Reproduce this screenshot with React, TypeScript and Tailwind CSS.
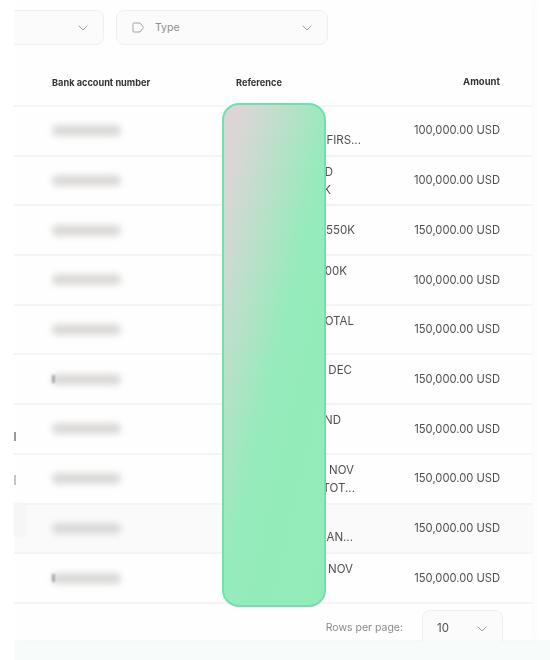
import React from 'react';
import { ChevronDown } from 'lucide-react';

type Line = { text: string; end: string };

const rows: { lines: Line[]; amount: string; mark?: boolean; hover?: boolean; edge?: string }[] = [
  { lines: [{ text: 'WIRE PAYOUT', end: 'pr-[40px]' }, { text: 'PAYOUT FIRS...', end: 'pr-px' }], amount: '100,000.00 USD' },
  { lines: [{ text: 'SETTLED', end: 'pr-[29px]' }, { text: 'BANK', end: 'pr-[31px]' }], amount: '100,000.00 USD' },
  { lines: [{ text: 'PAYOUT 550K', end: 'pr-[7px]' }], amount: '150,000.00 USD' },
  { lines: [{ text: 'TOTAL 100K', end: 'pr-[15px]' }, { text: 'PAYOUT', end: 'pr-[40px]' }], amount: '100,000.00 USD' },
  { lines: [{ text: 'PAY TOTAL', end: 'pr-[8px]' }, { text: 'PAYOUT', end: 'pr-[40px]' }], amount: '150,000.00 USD' },
  { lines: [{ text: 'PAY DEC', end: 'pr-[10px]' }, { text: 'PAYOUT', end: 'pr-[40px]' }], amount: '150,000.00 USD', mark: true },
  { lines: [{ text: 'SECOND', end: 'pr-[21px]' }, { text: 'PAYOUT', end: 'pr-[40px]' }], amount: '150,000.00 USD', edge: 'top-[27px] h-[9px] bg-[#9a9a9a]' },
  { lines: [{ text: 'PAY NOV', end: 'pr-[8px]' }, { text: 'PAY TOT...', end: 'pr-[7px]' }], amount: '150,000.00 USD', edge: 'top-[20px] h-[10px] bg-[#c4c4c4]' },
  { lines: [{ text: 'PAYOUT', end: 'pr-[40px]' }, { text: 'PAYOUT AN...', end: 'pr-[9px]' }], amount: '150,000.00 USD', hover: true },
  { lines: [{ text: 'PAY NOV', end: 'pr-[9px]' }, { text: 'PAYOUT', end: 'pr-[40px]' }], amount: '150,000.00 USD', mark: true },
];

export default function App() {
  return (
    <div className="relative w-[550px] h-[660px] overflow-hidden bg-white font-['Inter',sans-serif] text-[#4f4f4f]">
      <div className="ml-[14px] w-[518px] h-[640px] bg-[#fefefe] shadow-[4px_0_6px_rgba(0,0,0,0.02)] blur-[0.4px]">
        <div className="flex gap-3 h-[59px] pt-[10px]">
          <div className="flex items-center justify-end w-[90px] h-[35px] pr-[12px] bg-[#fbfbfb] border border-l-0 border-[#f0f0f0] rounded-r-lg">
            <ChevronDown size={16} strokeWidth={1.25} className="text-[#8a8a8a]" />
          </div>
          <div className="flex items-center w-[212px] h-[35px] pl-[15px] pr-[12px] bg-[#fbfbfb] border border-[#f0f0f0] rounded-lg">
            <svg width="13" height="11" viewBox="0 0 13 11" fill="none" stroke="#a3a3a3" strokeWidth="1">
              <path d="M1 2 a1 1 0 0 1 1-1 h6 l3.6 4.5 L8 10 H2 a1 1 0 0 1-1-1 z" />
            </svg>
            <span className="ml-[10px] text-[10.5px] text-[#8d8d8d]">Type</span>
            <ChevronDown size={16} strokeWidth={1.25} className="ml-auto text-[#8a8a8a]" />
          </div>
        </div>

        <div className="grid grid-cols-[184px_1fr_auto] items-center h-[48px] pt-px pl-[38px] pr-[32px] border-b-2 border-[#f4f4f4] font-bold text-[#333333]">
          <span className="text-[9.2px]">Bank account number</span>
          <span className="text-[9.2px]">Reference</span>
          <span className="text-[9.5px]">Amount</span>
        </div>

        {rows.map((row, i) => (
          <div
            key={i}
            className={`relative grid grid-cols-[184px_126px_1fr] items-center h-[49.7px] pl-[38px] pr-[32px] border-b-2 border-[#f4f4f4] ${row.hover ? 'bg-[#fafafa]' : ''}`}
          >
            {row.edge && <div className={`absolute left-0 w-[1.5px] ${row.edge}`} />}
            {row.hover && <div className="absolute left-0 -top-[2px] w-[12px] h-[34px] bg-[#f6f6f6] blur-[1px]" />}
            <div className="relative h-[11px]">
              <div className="w-[69px] h-[11px] rounded-full bg-[#dad9d7] blur-[3px]" />
              {row.mark && <div className="absolute left-0 top-[1px] w-[3px] h-[8px] bg-[#a8a8a8] blur-[1px]" />}
            </div>
            <div className="text-right text-[11.5px] leading-[18px] whitespace-nowrap overflow-hidden">
              {row.lines.map((line) => (
                <div key={line.text} className={line.end}>{line.text}</div>
              ))}
            </div>
            <div className="text-right text-[11.2px]">{row.amount}</div>
          </div>
        ))}

        <div className="flex items-start justify-end h-[37px] pr-[29px] pt-[6px] overflow-hidden">
          <span className="mt-[10px] text-[10.5px] text-[#8a8a8a]">Rows per page:</span>
          <div className="flex items-center justify-between ml-[19px] w-[81px] h-[38px] pl-[14px] pr-[12px] bg-[#fbfbfb] border border-[#eeeeee] rounded-lg">
            <span className="text-[11.5px]">10</span>
            <ChevronDown size={16} strokeWidth={1.25} className="text-[#8a8a8a]" />
          </div>
        </div>
      </div>

      <div className="ml-[14px] h-[20px] bg-[#f7fbfa]" />

      <div className="absolute left-[222px] top-[103px] w-[104px] h-[504px] rounded-[17px] border-2 border-[#6fe2ab] bg-[linear-gradient(103deg,#dbd6d6_0%,#dbd6d6_9%,#95ebbb_52%,#92ecb9_100%)]" />
    </div>
  );
}
